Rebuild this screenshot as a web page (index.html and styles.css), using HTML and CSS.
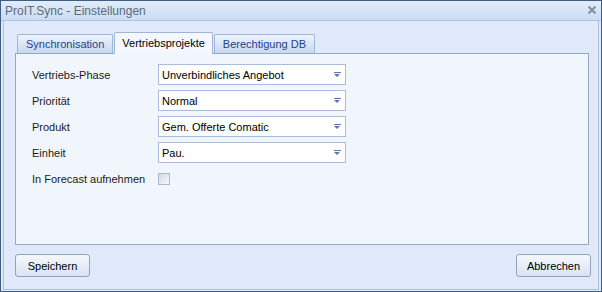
FILE: index.html
```html
<!DOCTYPE html>
<html lang="de">
<head>
  <meta charset="UTF-8">
  <title>ProIT.Sync - Einstellungen</title>
  <link rel="stylesheet" href="styles.css">
</head>
<body>

<div class="window">
  <div class="titlebar">
    <span class="title">ProIT.Sync - Einstellungen</span>
    <svg class="close" width="8" height="8" viewBox="0 0 8 8">
      <path d="M0.5 0.5 L7.5 7.5 M7.5 0.5 L0.5 7.5" stroke="#7f8da3" stroke-width="2"/>
    </svg>
  </div>

  <div class="client">
    <div class="tabs">
      <div class="tab">Synchronisation</div>
      <div class="tab active">Vertriebsprojekte</div>
      <div class="tab">Berechtigung DB</div>
    </div>

    <div class="panel">
      <div class="row">
        <label>Vertriebs-Phase</label>
        <div class="combo"><span>Unverbindliches Angebot</span><i class="arrow"></i></div>
      </div>
      <div class="row">
        <label>Priorität</label>
        <div class="combo"><span>Normal</span><i class="arrow"></i></div>
      </div>
      <div class="row">
        <label>Produkt</label>
        <div class="combo"><span>Gem. Offerte Comatic</span><i class="arrow"></i></div>
      </div>
      <div class="row">
        <label>Einheit</label>
        <div class="combo"><span>Pau.</span><i class="arrow"></i></div>
      </div>
      <div class="row">
        <label>In Forecast aufnehmen</label>
        <div class="check"></div>
      </div>
    </div>

    <div class="buttons">
      <button>Speichern</button>
      <button>Abbrechen</button>
    </div>
  </div>
</div>

</body>
</html>
```

FILE: styles.css
```css
body {
  margin: 0;
  font-family: "Liberation Sans", Arial, sans-serif;
  font-size: 11px;
  color: #1a1a1a;
}

.window {
  width: 602px;
  height: 292px;
  box-sizing: border-box;
  border: 1px solid #3f5e86;
  background: #dfe9f9;
  display: flex;
  flex-direction: column;
}

.titlebar {
  height: 19px;
  border-bottom: 1px solid #a9c6ea;
  background: linear-gradient(#e2ecf9, #d5e3f6 55%, #cbdcf3);
  display: flex;
  align-items: center;
  justify-content: space-between;
  padding: 0 5px 0 4px;
}

.title {
  font-size: 12px;
  color: #5b6a80;
}

.close {
  margin-top: -2px;
}

.client {
  flex: 1;
  margin: 0 2px 1px 2px;
  border: 1px solid #a6c2e6;
  border-top: none;
  padding: 12px 9px 0 11px;
  display: flex;
  flex-direction: column;
}

.tabs {
  display: flex;
  align-items: flex-end;
  height: 20px;
  padding-left: 2px;
  position: relative;
  z-index: 1;
}

.tab {
  height: 18px;
  line-height: 18px;
  padding: 0 8px;
  margin-right: 2px;
  border: 1px solid #9fb6d6;
  border-bottom: none;
  border-radius: 2px 2px 0 0;
  background: linear-gradient(#eef4fc, #d9e6f7 50%, #c7d8f0);
  color: #1d3f8c;
}

.tab.active {
  height: 21px;
  line-height: 20px;
  margin-bottom: -1px;
  margin-left: -1px;
  margin-right: 0;
  padding: 0 7px;
  background: #f4f8fe;
  color: #000;
}

.tab.active + .tab {
  margin-left: 1px;
}

.panel {
  height: 180px;
  border: 1px solid #95a9c6;
  background: #f1f6fd;
  padding: 10px 16px 0 16px;
  display: flex;
  flex-direction: column;
  gap: 5px;
}

.row {
  display: flex;
  align-items: center;
  height: 21px;
}

.row label {
  width: 126px;
  flex: none;
}

.combo {
  width: 179px;
  height: 19px;
  border: 1px solid #a9bedd;
  background: #fff;
  display: flex;
  align-items: center;
  justify-content: space-between;
  padding-left: 3px;
  padding-right: 4px;
  color: #000;
}

.arrow {
  width: 7px;
  height: 5px;
  border-top: 1px solid #5878ad;
  box-sizing: border-box;
  position: relative;
}

.arrow::after {
  content: "";
  position: absolute;
  left: 0;
  top: 1px;
  border-left: 3.5px solid transparent;
  border-right: 3.5px solid transparent;
  border-top: 3px solid #5878ad;
}

.check {
  width: 10px;
  height: 10px;
  border: 1px solid #a6bcd9;
  background: linear-gradient(135deg, #d6d9de, #f7f8fa);
}

.buttons {
  display: flex;
  justify-content: space-between;
  margin-top: 9px;
  margin-right: -2px;
}

button {
  width: 75px;
  height: 23px;
  border: 1px solid #8fa4c3;
  border-radius: 3px;
  background: linear-gradient(#f5f8fd, #e6edf8 50%, #d8e3f3);
  font-family: "Liberation Sans", Arial, sans-serif;
  font-size: 11px;
  color: #000;
  padding: 0;
}
```
